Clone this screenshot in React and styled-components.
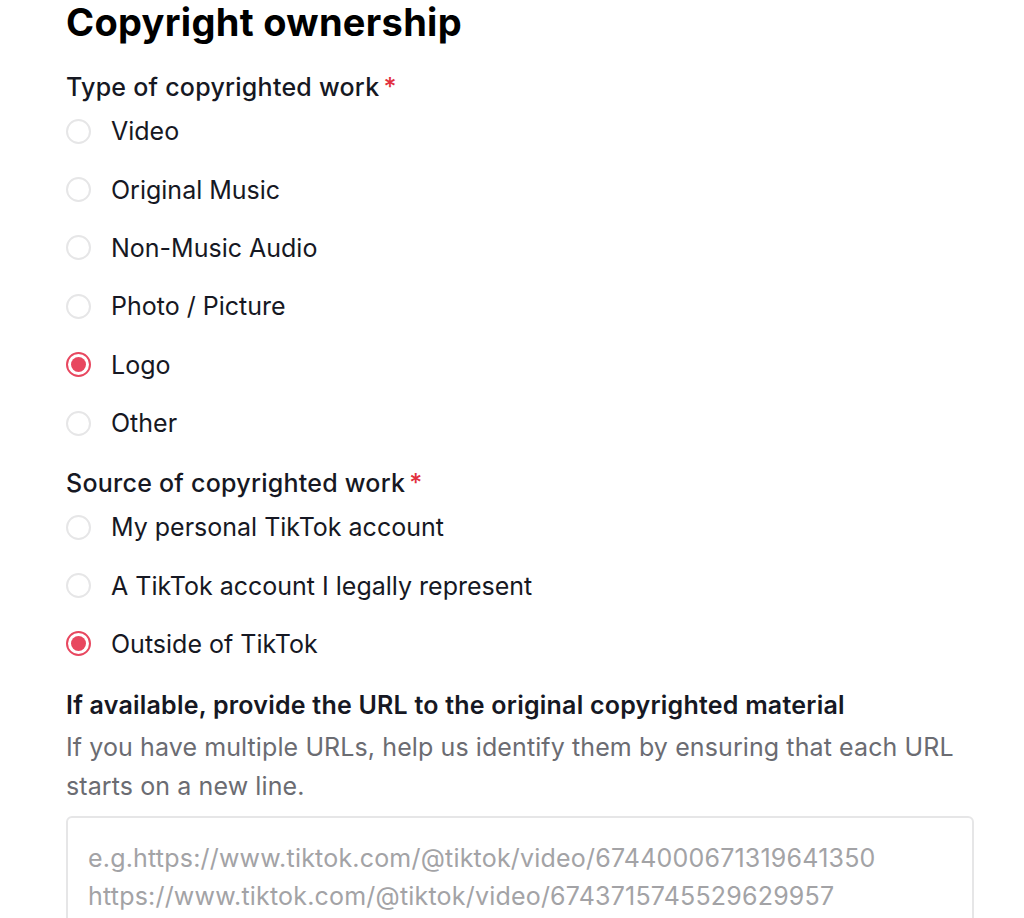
import React from "react";
import styled, { createGlobalStyle } from "styled-components";

const Global = createGlobalStyle`
  html, body { margin: 0; padding: 0; background: #ffffff; }
  body { font-family: "Inter", "Liberation Sans", sans-serif; color: #161823; -webkit-font-smoothing: antialiased; }
`;

const Page = styled.div`
  width: 1024px;
  height: 918px;
  overflow: hidden;
  box-sizing: border-box;
  padding: 0 50px 0 66px;
`;

const Title = styled.h1`
  margin: 0;
  font-size: 38px;
  line-height: 44px;
  font-weight: 700;
  color: #000;
  letter-spacing: 0.3px;
`;

const Label = styled.div`
  margin-top: ${(p) => p.$mt}px;
  font-size: 25px;
  line-height: 30px;
  font-weight: 500;
  letter-spacing: 0.25px;
  color: #161823;
`;

const Star = styled.span`
  color: #e2303e;
  margin-left: 4px;
`;

const Group = styled.div`
  display: flex;
  flex-direction: column;
`;

const Row = styled.label`
  display: flex;
  align-items: center;
  height: 58.4px;
  gap: 20px;
  font-size: 25px;
  color: #161823;
`;

const Radio = styled.span`
  box-sizing: border-box;
  width: 25px;
  height: 25px;
  border-radius: 50%;
  border: 2px solid ${(p) => (p.$on ? "#e8475f" : "#e6e6e7")};
  display: flex;
  align-items: center;
  justify-content: center;
  flex: none;
  &::after {
    content: "";
    display: ${(p) => (p.$on ? "block" : "none")};
    width: 15px;
    height: 15px;
    border-radius: 50%;
    background: #e8475f;
  }
`;

const SubHeading = styled.div`
  margin-top: 17px;
  font-size: 25px;
  line-height: 30px;
  font-weight: 600;
  letter-spacing: 0.22px;
  color: #161823;
`;

const Desc = styled.p`
  margin: 8px 0 0;
  font-size: 25px;
  line-height: 39px;
  letter-spacing: 0.1px;
  color: #6b6c72;
  max-width: 900px;
`;

const Box = styled.div`
  margin-top: 10px;
  width: 908px;
  box-sizing: border-box;
  border: 2px solid #e6e6e7;
  border-radius: 6px;
  padding: 21px 20px;
  height: 140px;
`;

const Placeholder = styled.div`
  font-size: 25px;
  line-height: 38px;
  letter-spacing: 0.2px;
  color: #a3a3a6;
  white-space: pre;
`;

const types = ["Video", "Original Music", "Non-Music Audio", "Photo / Picture", "Logo", "Other"];
const sources = ["My personal TikTok account", "A TikTok account I legally represent", "Outside of TikTok"];

export default function App() {
  return (
    <>
      <Global />
      <Page>
        <Title>Copyright ownership</Title>
        <Label $mt={28}>
          Type of copyrighted work<Star>*</Star>
        </Label>
        <Group>
          {types.map((t) => (
            <Row key={t}>
              <Radio $on={t === "Logo"} />
              {t}
            </Row>
          ))}
        </Group>
        <Label $mt={15.6}>
          Source of copyrighted work<Star>*</Star>
        </Label>
        <Group>
          {sources.map((t) => (
            <Row key={t}>
              <Radio $on={t === "Outside of TikTok"} />
              {t}
            </Row>
          ))}
        </Group>
        <SubHeading>If available, provide the URL to the original copyrighted material</SubHeading>
        <Desc>
          If you have multiple URLs, help us identify them by ensuring that each URL starts on a new line.
        </Desc>
        <Box>
          <Placeholder>
            {"e.g.https://www.tiktok.com/@tiktok/video/6744000671319641350\nhttps://www.tiktok.com/@tiktok/video/6743715745529629957"}
          </Placeholder>
        </Box>
      </Page>
    </>
  );
}
